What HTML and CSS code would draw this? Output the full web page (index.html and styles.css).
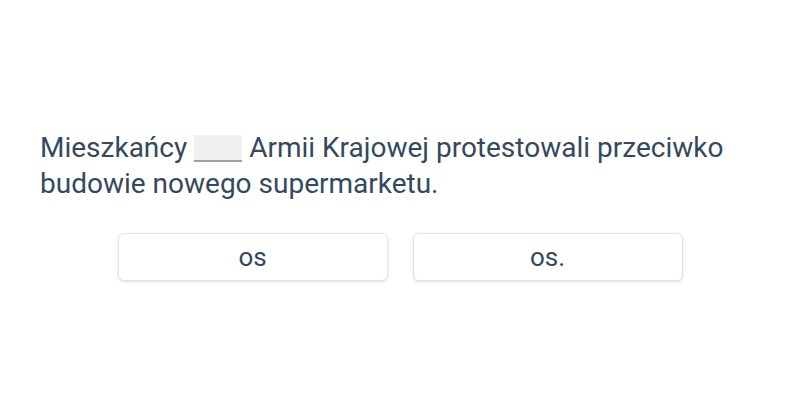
FILE: index.html
```html
<html>
	<head>
		<title>Exercise</title>
		<link rel="stylesheet" href="styles.css">
	</head>
	<body>
		<div class="exercise">
			<div class="sentence">
				Mieszkańcy <span class="gap"></span> Armii Krajowej protestowali przeciwko budowie nowego supermarketu.
			</div>
			<div class="answers">
				<button class="answer">os</button>
				<button class="answer">os.</button>
			</div>
		</div>
	</body>
</html>
```
FILE: styles.css
```css
body {
	margin: 0;
	background-color: white;
	font-family: Roboto, "Noto Sans", sans-serif;
	color: #34495e;
}

.exercise {
	min-height: 400px;
	display: flex;
	flex-direction: column;
	justify-content: center;
	padding: 11px 40px 0 40px;
	box-sizing: border-box;
}

.sentence {
	font-size: 28px;
	line-height: 36px;
	margin-bottom: 31px;
}

/* the empty slot the user fills in */
.gap {
	display: inline-block;
	width: 48px;
	height: 25px;
	vertical-align: -5px;
	background-color: #eef0f2;
	border-bottom: 2px solid #95a5a6;
}

.answers {
	display: flex;
	justify-content: center;
	gap: 25px;
}

.answer {
	width: 270px;
	height: 48px;
	background-color: white;
	border: 1px solid #e1e3e6;
	border-radius: 6px;
	box-shadow: 0 1px 3px rgba(0, 0, 0, 0.12);
	font-family: Roboto, "Noto Sans", sans-serif;
	font-size: 26px;
	color: #34495e;
	cursor: pointer;
}
```
